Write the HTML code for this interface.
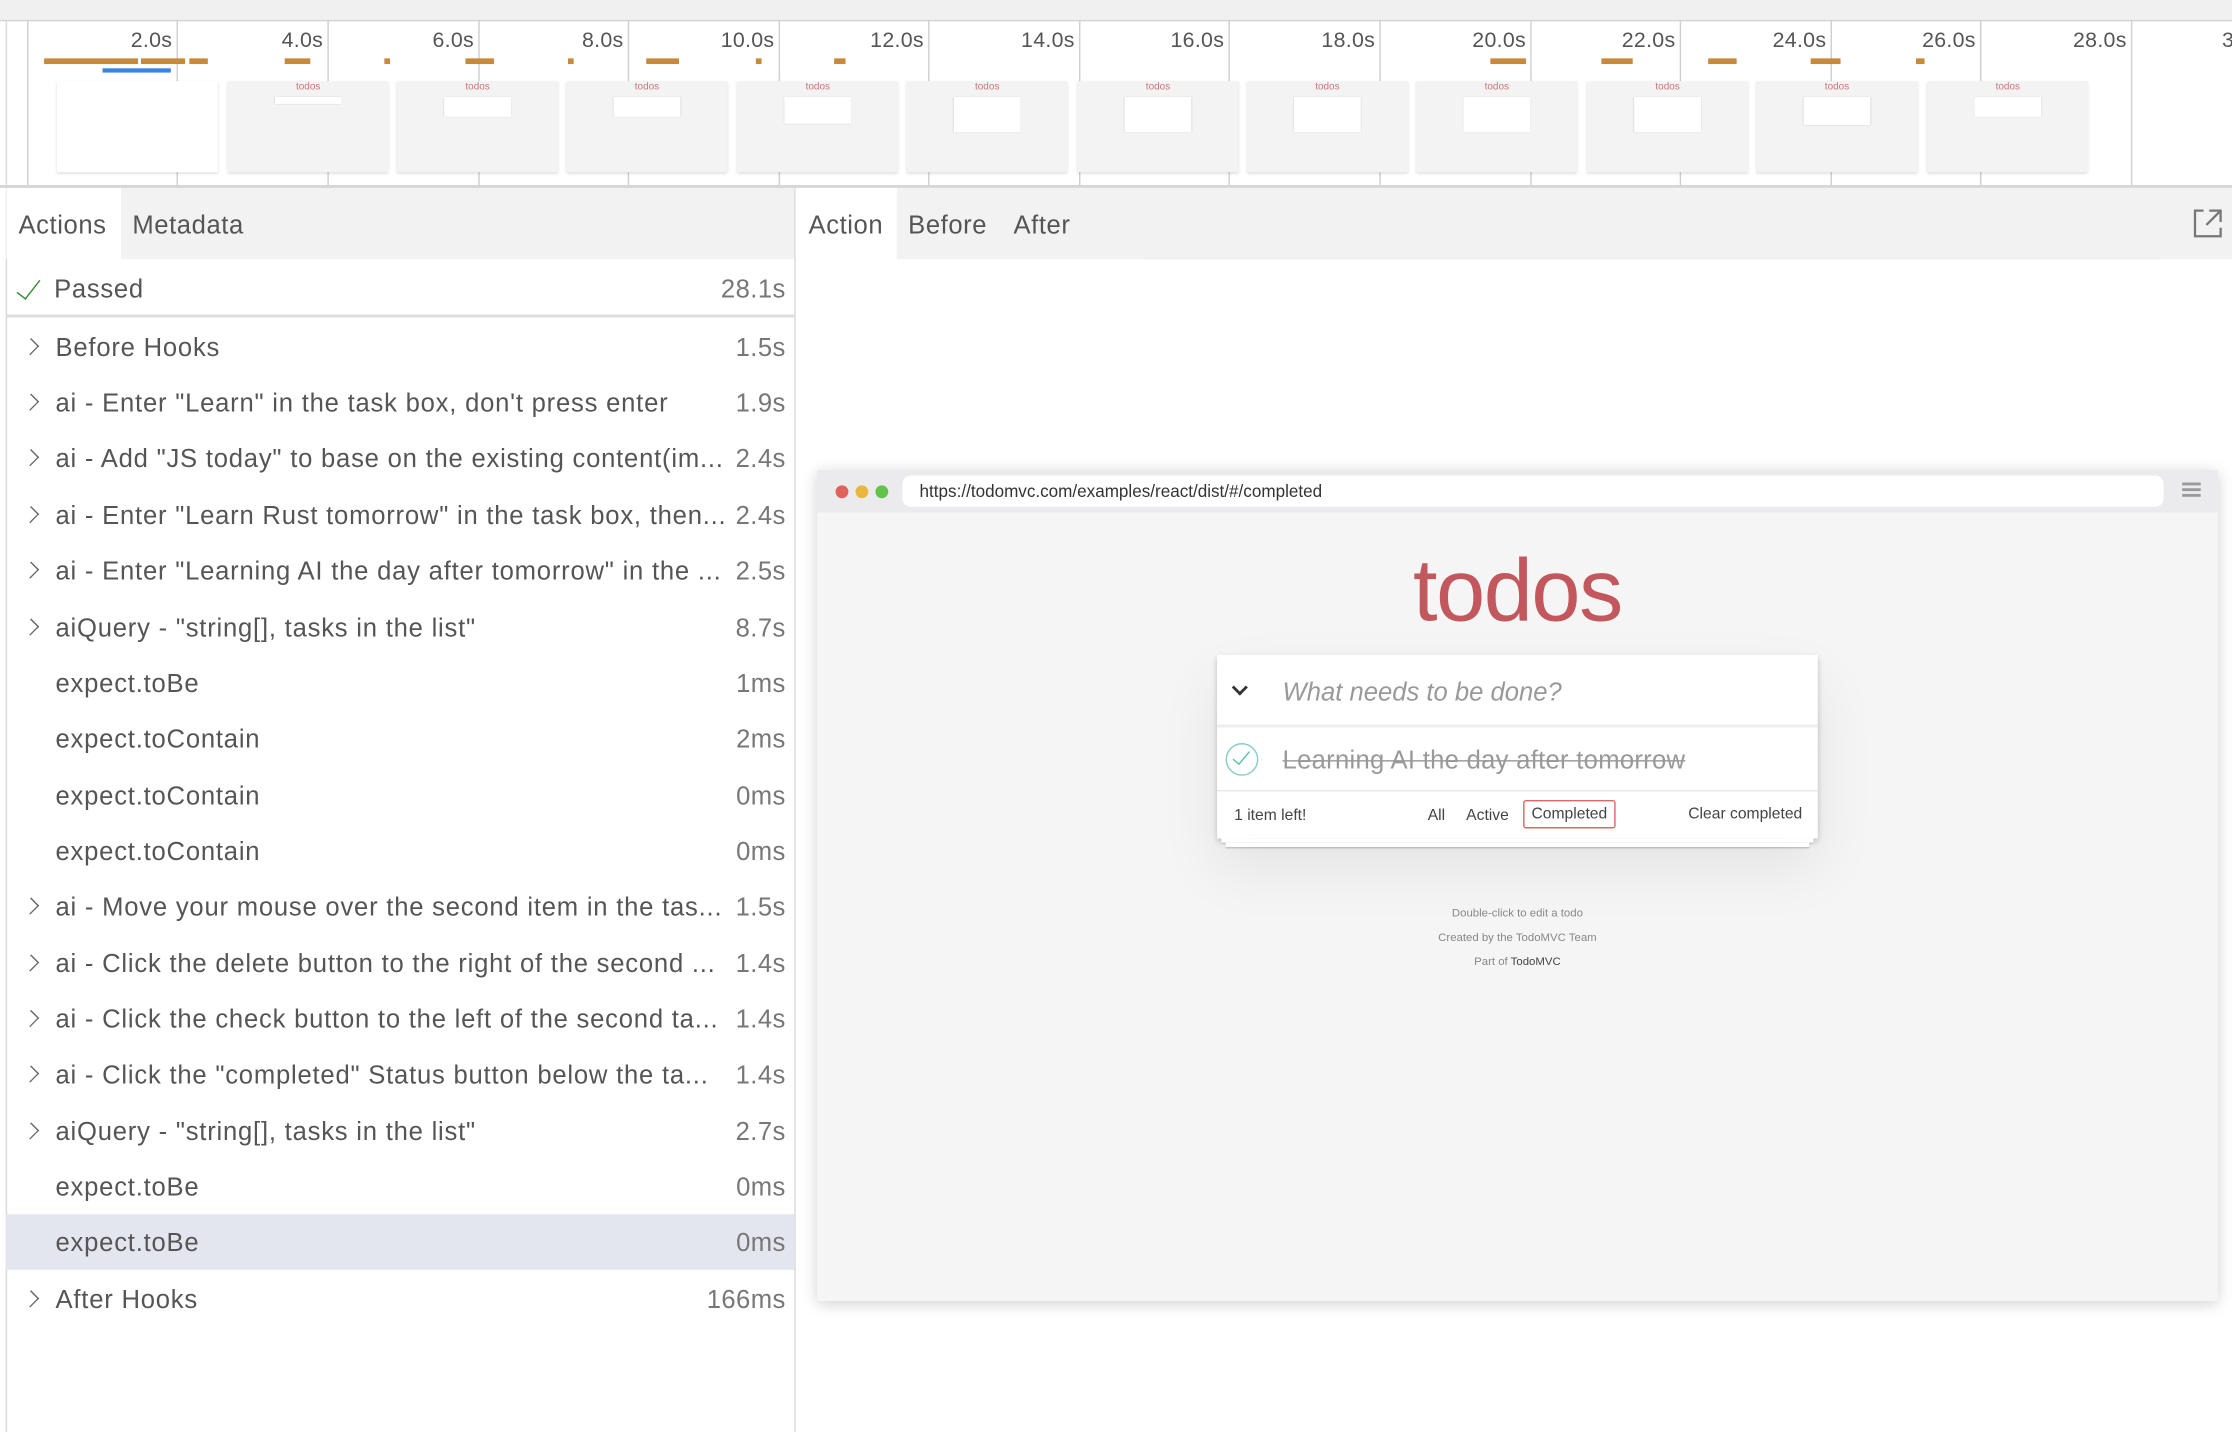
<!DOCTYPE html>
<html><head><meta charset="utf-8">
<style>
html,body{margin:0;padding:0;width:2232px;height:1432px;overflow:hidden;background:#fff;}
#s{position:absolute;left:0;top:0;width:1568px;height:1006px;transform:scale(1.42347);transform-origin:0 0;font-family:"Liberation Sans",sans-serif;background:#fff;}
.a{position:absolute;}
.vl{position:absolute;top:14px;width:1px;height:116px;background:#cfcfcf;}
.lab{position:absolute;top:20px;font-size:15px;color:#555;text-align:right;width:60px;letter-spacing:.2px;}
.ob{position:absolute;top:41px;height:4px;background:#c8893a;}
.th{position:absolute;top:57px;width:113px;height:64px;background:#f3f3f3;box-shadow:0 1px 2px rgba(0,0,0,.15);overflow:hidden;}
.th .t{position:absolute;top:1px;left:0;width:100%;text-align:center;font-size:7px;color:#c9777a;}
.th .b{position:absolute;top:11px;left:33px;width:47px;background:#fff;box-shadow:0 0 1px rgba(0,0,0,.3);}
.row{position:absolute;left:4px;width:554px;height:39px;font-size:18px;color:#555;letter-spacing:.55px;}
.row .n{position:absolute;left:35px;top:10px;white-space:nowrap;}
.row .d{position:absolute;right:6px;top:10px;color:#777;letter-spacing:.3px;}
.row .c{position:absolute;left:13px;top:15px;width:8px;height:8px;border-right:1.3px solid #666;border-top:1.3px solid #666;transform:rotate(45deg) scale(.9,1);}
.tab{position:absolute;top:148px;font-size:18px;color:#555;letter-spacing:.4px;}
</style></head><body><div id="s">
<div class="a" style="left:0;top:0;width:1568px;height:14px;background:#f0f0f0;border-bottom:1px solid #d5d5d5;"></div>
<div class="a" style="left:4px;top:14px;width:1px;height:992px;background:#d8d8d8;"></div>
<div class="vl" style="left:19px"></div><div class="vl" style="left:124px"></div><div class="vl" style="left:230px"></div><div class="vl" style="left:336px"></div><div class="vl" style="left:441px"></div><div class="vl" style="left:547px"></div><div class="vl" style="left:652px"></div><div class="vl" style="left:758px"></div><div class="vl" style="left:863px"></div><div class="vl" style="left:969px"></div><div class="vl" style="left:1075px"></div><div class="vl" style="left:1180px"></div><div class="vl" style="left:1286px"></div><div class="vl" style="left:1391px"></div><div class="vl" style="left:1497px"></div>
<div class="lab" style="left:61px">2.0s</div><div class="lab" style="left:167px">4.0s</div><div class="lab" style="left:273px">6.0s</div><div class="lab" style="left:378px">8.0s</div><div class="lab" style="left:484px">10.0s</div><div class="lab" style="left:589px">12.0s</div><div class="lab" style="left:695px">14.0s</div><div class="lab" style="left:800px">16.0s</div><div class="lab" style="left:906px">18.0s</div><div class="lab" style="left:1012px">20.0s</div><div class="lab" style="left:1117px">22.0s</div><div class="lab" style="left:1223px">24.0s</div><div class="lab" style="left:1328px">26.0s</div><div class="lab" style="left:1434px">28.0s</div><div class="lab" style="left:1500px;text-align:left;padding-left:61px">30.0s</div>
<div class="ob" style="left:31px;width:66px"></div><div class="ob" style="left:99px;width:31px"></div><div class="ob" style="left:133px;width:13px"></div><div class="ob" style="left:200px;width:18px"></div><div class="ob" style="left:270px;width:4px"></div><div class="ob" style="left:327px;width:20px"></div><div class="ob" style="left:399px;width:4px"></div><div class="ob" style="left:454px;width:23px"></div><div class="ob" style="left:531px;width:4px"></div><div class="ob" style="left:586px;width:8px"></div>
<div class="ob" style="left:1047px;width:25px"></div><div class="ob" style="left:1125px;width:22px"></div><div class="ob" style="left:1200px;width:20px"></div><div class="ob" style="left:1272px;width:21px"></div><div class="ob" style="left:1346px;width:6px"></div>
<div class="a" style="left:72px;top:48px;width:48px;height:3px;background:#3b82e8;"></div>
<div class="th" style="left:40px;background:#fff"></div>
<div class="th" style="left:160px"><div class="t">todos</div><div class="b" style="height:5px"></div></div>
<div class="th" style="left:279px"><div class="t">todos</div><div class="b" style="height:14px"></div></div>
<div class="th" style="left:398px"><div class="t">todos</div><div class="b" style="height:14px"></div></div>
<div class="th" style="left:518px"><div class="t">todos</div><div class="b" style="height:19px"></div></div>
<div class="th" style="left:637px"><div class="t">todos</div><div class="b" style="height:25px"></div></div>
<div class="th" style="left:757px"><div class="t">todos</div><div class="b" style="height:25px"></div></div>
<div class="th" style="left:876px"><div class="t">todos</div><div class="b" style="height:25px"></div></div>
<div class="th" style="left:995px"><div class="t">todos</div><div class="b" style="height:25px"></div></div>
<div class="th" style="left:1115px"><div class="t">todos</div><div class="b" style="height:25px"></div></div>
<div class="th" style="left:1234px"><div class="t">todos</div><div class="b" style="height:20px"></div></div>
<div class="th" style="left:1354px"><div class="t">todos</div><div class="b" style="height:14px"></div></div>
<div class="a" style="left:0;top:130px;width:1568px;height:2px;background:#d5d5d5;"></div>
<div class="a" style="left:4px;top:132px;width:554px;height:50px;background:#f2f2f2;"></div>
<div class="a" style="left:5px;top:132px;width:80px;height:50px;background:#fff;"></div>
<div class="tab" style="left:13px;">Actions</div>
<div class="tab" style="left:93px;">Metadata</div>
<div class="a" style="left:558px;top:132px;width:1px;height:874px;background:#d8d8d8;"></div>
<div class="a" style="left:5px;top:221px;width:553px;height:2px;background:#ddd;"></div>
<div class="a" style="left:16px;top:193px;width:7px;height:16px;border-right:1.6px solid #3a8a3a;border-bottom:1.6px solid #3a8a3a;transform:rotate(38deg);"></div>
<div class="a" style="left:38px;top:193px;font-size:18px;color:#555;letter-spacing:.5px;">Passed</div>
<div class="a" style="right:1016px;top:193px;font-size:18px;color:#777;letter-spacing:.3px;">28.1s</div>
<div class="row" style="top:853px;background:#e3e6ef;"></div>
<div class="row" style="top:224px"><i class="c"></i><span class="n">Before Hooks</span><span class="d">1.5s</span></div>
<div class="row" style="top:263px"><i class="c"></i><span class="n">ai - Enter "Learn" in the task box, don't press enter</span><span class="d">1.9s</span></div>
<div class="row" style="top:302px"><i class="c"></i><span class="n">ai - Add "JS today" to base on the existing content(im...</span><span class="d">2.4s</span></div>
<div class="row" style="top:342px"><i class="c"></i><span class="n">ai - Enter "Learn Rust tomorrow" in the task box, then...</span><span class="d">2.4s</span></div>
<div class="row" style="top:381px"><i class="c"></i><span class="n">ai - Enter "Learning AI the day after tomorrow" in the ...</span><span class="d">2.5s</span></div>
<div class="row" style="top:421px"><i class="c"></i><span class="n">aiQuery - "string[], tasks in the list"</span><span class="d">8.7s</span></div>
<div class="row" style="top:460px"><span class="n">expect.toBe</span><span class="d">1ms</span></div>
<div class="row" style="top:499px"><span class="n">expect.toContain</span><span class="d">2ms</span></div>
<div class="row" style="top:539px"><span class="n">expect.toContain</span><span class="d">0ms</span></div>
<div class="row" style="top:578px"><span class="n">expect.toContain</span><span class="d">0ms</span></div>
<div class="row" style="top:617px"><i class="c"></i><span class="n">ai - Move your mouse over the second item in the tas...</span><span class="d">1.5s</span></div>
<div class="row" style="top:657px"><i class="c"></i><span class="n">ai - Click the delete button to the right of the second ...</span><span class="d">1.4s</span></div>
<div class="row" style="top:696px"><i class="c"></i><span class="n">ai - Click the check button to the left of the second ta...</span><span class="d">1.4s</span></div>
<div class="row" style="top:735px"><i class="c"></i><span class="n">ai - Click the "completed" Status button below the ta...</span><span class="d">1.4s</span></div>
<div class="row" style="top:775px"><i class="c"></i><span class="n">aiQuery - "string[], tasks in the list"</span><span class="d">2.7s</span></div>
<div class="row" style="top:814px"><span class="n">expect.toBe</span><span class="d">0ms</span></div>
<div class="row" style="top:853px"><span class="n">expect.toBe</span><span class="d">0ms</span></div>
<div class="row" style="top:893px"><i class="c"></i><span class="n">After Hooks</span><span class="d">166ms</span></div>
<div class="a" style="left:559px;top:132px;width:1009px;height:50px;background:#f2f2f2;"></div>
<div class="a" style="left:559px;top:132px;width:71px;height:50px;background:#fff;"></div>
<div class="tab" style="left:568px;">Action</div>
<div class="tab" style="left:638px;">Before</div>
<div class="tab" style="left:712px;">After</div>
<svg class="a" style="left:1540px;top:146px" width="22" height="22" viewBox="0 0 22 22" fill="none" stroke="#777" stroke-width="1.6"><path d="M8 2H2V20H20V14"/><path d="M12 2H20V10M20 2L10 12"/></svg>
<div class="a" style="left:574px;top:330px;width:984px;height:584px;background:#f5f5f5;box-shadow:0 2px 10px rgba(0,0,0,.18);">
 <div class="a" style="left:0;top:0;width:984px;height:30px;background:#ebebed;"></div>
 <div class="a" style="left:13px;top:11px;width:9px;height:9px;border-radius:50%;background:#e0625a;"></div>
 <div class="a" style="left:27px;top:11px;width:9px;height:9px;border-radius:50%;background:#e8b73f;"></div>
 <div class="a" style="left:41px;top:11px;width:9px;height:9px;border-radius:50%;background:#63c249;"></div>
 <div class="a" style="left:60px;top:4px;width:886px;height:22px;border-radius:6px;background:#fff;"></div>
 <div class="a" style="left:72px;top:8px;font-size:12px;color:#333;">https://todomvc.com/examples/react/dist/#/completed</div>
 <div class="a" style="left:959px;top:9px;width:13px;height:2px;background:#999;box-shadow:0 4px 0 #999,0 8px 0 #999;"></div>
 <div class="a" style="left:0;top:50px;width:984px;text-align:center;font-size:62px;color:#c2585d;letter-spacing:-1px;">todos</div>
 <div class="a" style="left:281px;top:130px;width:422px;height:129px;background:#fff;box-shadow:0 2px 4px rgba(0,0,0,.2),0 20px 40px rgba(0,0,0,.08);">
  <div class="a" style="left:12px;top:19px;width:6px;height:6px;border-right:2px solid #333;border-bottom:2px solid #333;transform:rotate(45deg);"></div>
  <div class="a" style="left:46px;top:16px;font-size:18px;font-style:italic;color:#999;">What needs to be done?</div>
  <div class="a" style="left:0;top:49px;width:422px;height:2px;background:#ededed;"></div>
  <div class="a" style="left:6px;top:62px;width:21px;height:21px;border:1px solid #8cc;border-radius:50%;"></div>
  <div class="a" style="left:14px;top:65px;width:5px;height:11px;border-right:1.5px solid #5dc2af;border-bottom:1.5px solid #5dc2af;transform:rotate(40deg);"></div>
  <div class="a" style="left:46px;top:64px;font-size:18px;color:#999;text-decoration:line-through;letter-spacing:.2px;">Learning AI the day after tomorrow</div>
  <div class="a" style="left:0;top:95px;width:422px;height:1px;background:#e6e6e6;"></div>
  <div class="a" style="left:12px;top:107px;font-size:11px;color:#444;">1 item left!</div>
  <div class="a" style="left:148px;top:107px;font-size:11px;color:#444;">All</div>
  <div class="a" style="left:175px;top:107px;font-size:11px;color:#444;">Active</div>
  <div class="a" style="left:215px;top:102px;width:63px;height:18px;border:1px solid #d66;border-radius:2px;font-size:11px;color:#444;text-align:center;line-height:18px;">Completed</div>
  <div class="a" style="left:331px;top:106px;font-size:11px;color:#444;">Clear completed</div>
 </div>
 <div class="a" style="left:284px;top:259px;width:416px;height:3px;background:#fff;box-shadow:0 1px 1px rgba(0,0,0,.2);"></div>
 <div class="a" style="left:287px;top:262px;width:410px;height:3px;background:#fff;box-shadow:0 1px 1px rgba(0,0,0,.2);"></div>
 <div class="a" style="left:0;top:303px;width:984px;text-align:center;font-size:8px;color:#888;line-height:17px;">Double-click to edit a todo<br>Created by the TodoMVC Team<br>Part of <span style="color:#444">TodoMVC</span></div>
</div>
</div></body></html>
